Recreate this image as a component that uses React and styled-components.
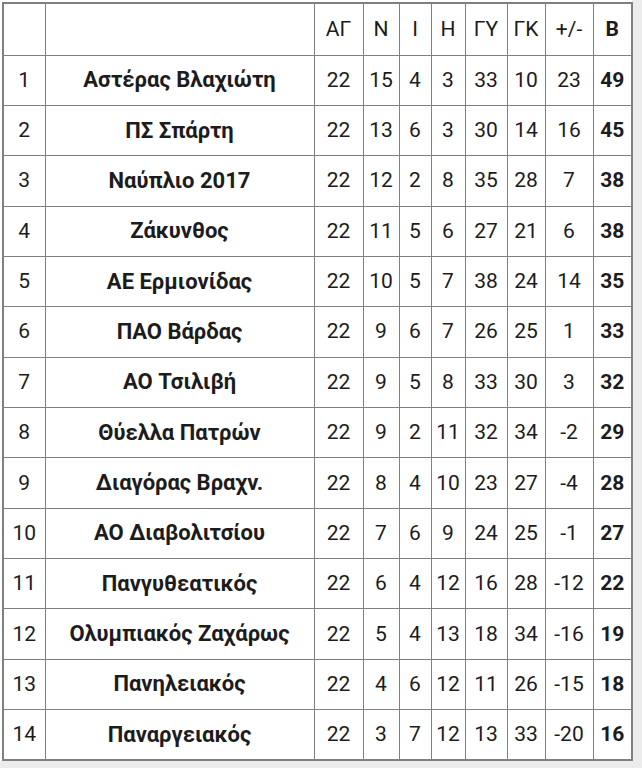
import React from "react";
import styled, { createGlobalStyle } from "styled-components";

const Global = createGlobalStyle`
  html, body { margin: 0; padding: 0; background: #ececec; }
  body { font-family: Roboto, "Liberation Sans", Arial, sans-serif; color: #1f1f1f; }
`;

const Page = styled.div`
  width: 632px;
  padding: 2px 0 0 2px;
  background: #ffffff;
  box-sizing: border-box;
`;

const Table = styled.table`
  border-collapse: collapse;
  table-layout: fixed;
  width: 630px;
  background: #ffffff;
  border: 2px solid #808080;
`;

const HeadRow = styled.tr`
  height: 52px;
`;

const Row = styled.tr`
  height: 50.36px;
`;

const Cell = styled.td`
  border: 1px solid #808080;
  padding: 0;
  text-align: center;
  vertical-align: middle;
  font-size: ${(p) => (p.$name ? 22 : 21)}px;
  line-height: 1;
  font-weight: ${(p) => (p.$bold ? 700 : 400)};
  color: #1c1c1c;
  white-space: nowrap;
`;

const HeadCell = styled(Cell).attrs({ as: "th" })``;

const widths = [42, 269, 49, 36, 32, 34, 42, 38, 48, 39];

const rows = [
  [1, "Αστέρας Βλαχιώτη", 22, 15, 4, 3, 33, 10, 23, 49],
  [2, "ΠΣ Σπάρτη", 22, 13, 6, 3, 30, 14, 16, 45],
  [3, "Ναύπλιο 2017", 22, 12, 2, 8, 35, 28, 7, 38],
  [4, "Ζάκυνθος", 22, 11, 5, 6, 27, 21, 6, 38],
  [5, "ΑΕ Ερμιονίδας", 22, 10, 5, 7, 38, 24, 14, 35],
  [6, "ΠΑΟ Βάρδας", 22, 9, 6, 7, 26, 25, 1, 33],
  [7, "ΑΟ Τσιλιβή", 22, 9, 5, 8, 33, 30, 3, 32],
  [8, "Θύελλα Πατρών", 22, 9, 2, 11, 32, 34, -2, 29],
  [9, "Διαγόρας Βραχν.", 22, 8, 4, 10, 23, 27, -4, 28],
  [10, "ΑΟ Διαβολιτσίου", 22, 7, 6, 9, 24, 25, -1, 27],
  [11, "Πανγυθεατικός", 22, 6, 4, 12, 16, 28, -12, 22],
  [12, "Ολυμπιακός Ζαχάρως", 22, 5, 4, 13, 18, 34, -16, 19],
  [13, "Πανηλειακός", 22, 4, 6, 12, 11, 26, -15, 18],
  [14, "Παναργειακός", 22, 3, 7, 12, 13, 33, -20, 16],
];

const headers = ["", "", "ΑΓ", "Ν", "Ι", "Η", "ΓΥ", "ΓΚ", "+/-", "Β"];

export default function App() {
  return (
    <>
      <Global />
      <Page>
        <Table>
          <colgroup>
            {widths.map((w, i) => (
              <col key={i} style={{ width: w }} />
            ))}
          </colgroup>
          <thead>
            <HeadRow>
              {headers.map((h, i) => (
                <HeadCell key={i} $bold={i === 9}>
                  {h}
                </HeadCell>
              ))}
            </HeadRow>
          </thead>
          <tbody>
            {rows.map((r) => (
              <Row key={r[0]}>
                {r.map((v, i) => (
                  <Cell key={i} $name={i === 1} $bold={i === 1 || i === 9}>
                    {v}
                  </Cell>
                ))}
              </Row>
            ))}
          </tbody>
        </Table>
      </Page>
    </>
  );
}
